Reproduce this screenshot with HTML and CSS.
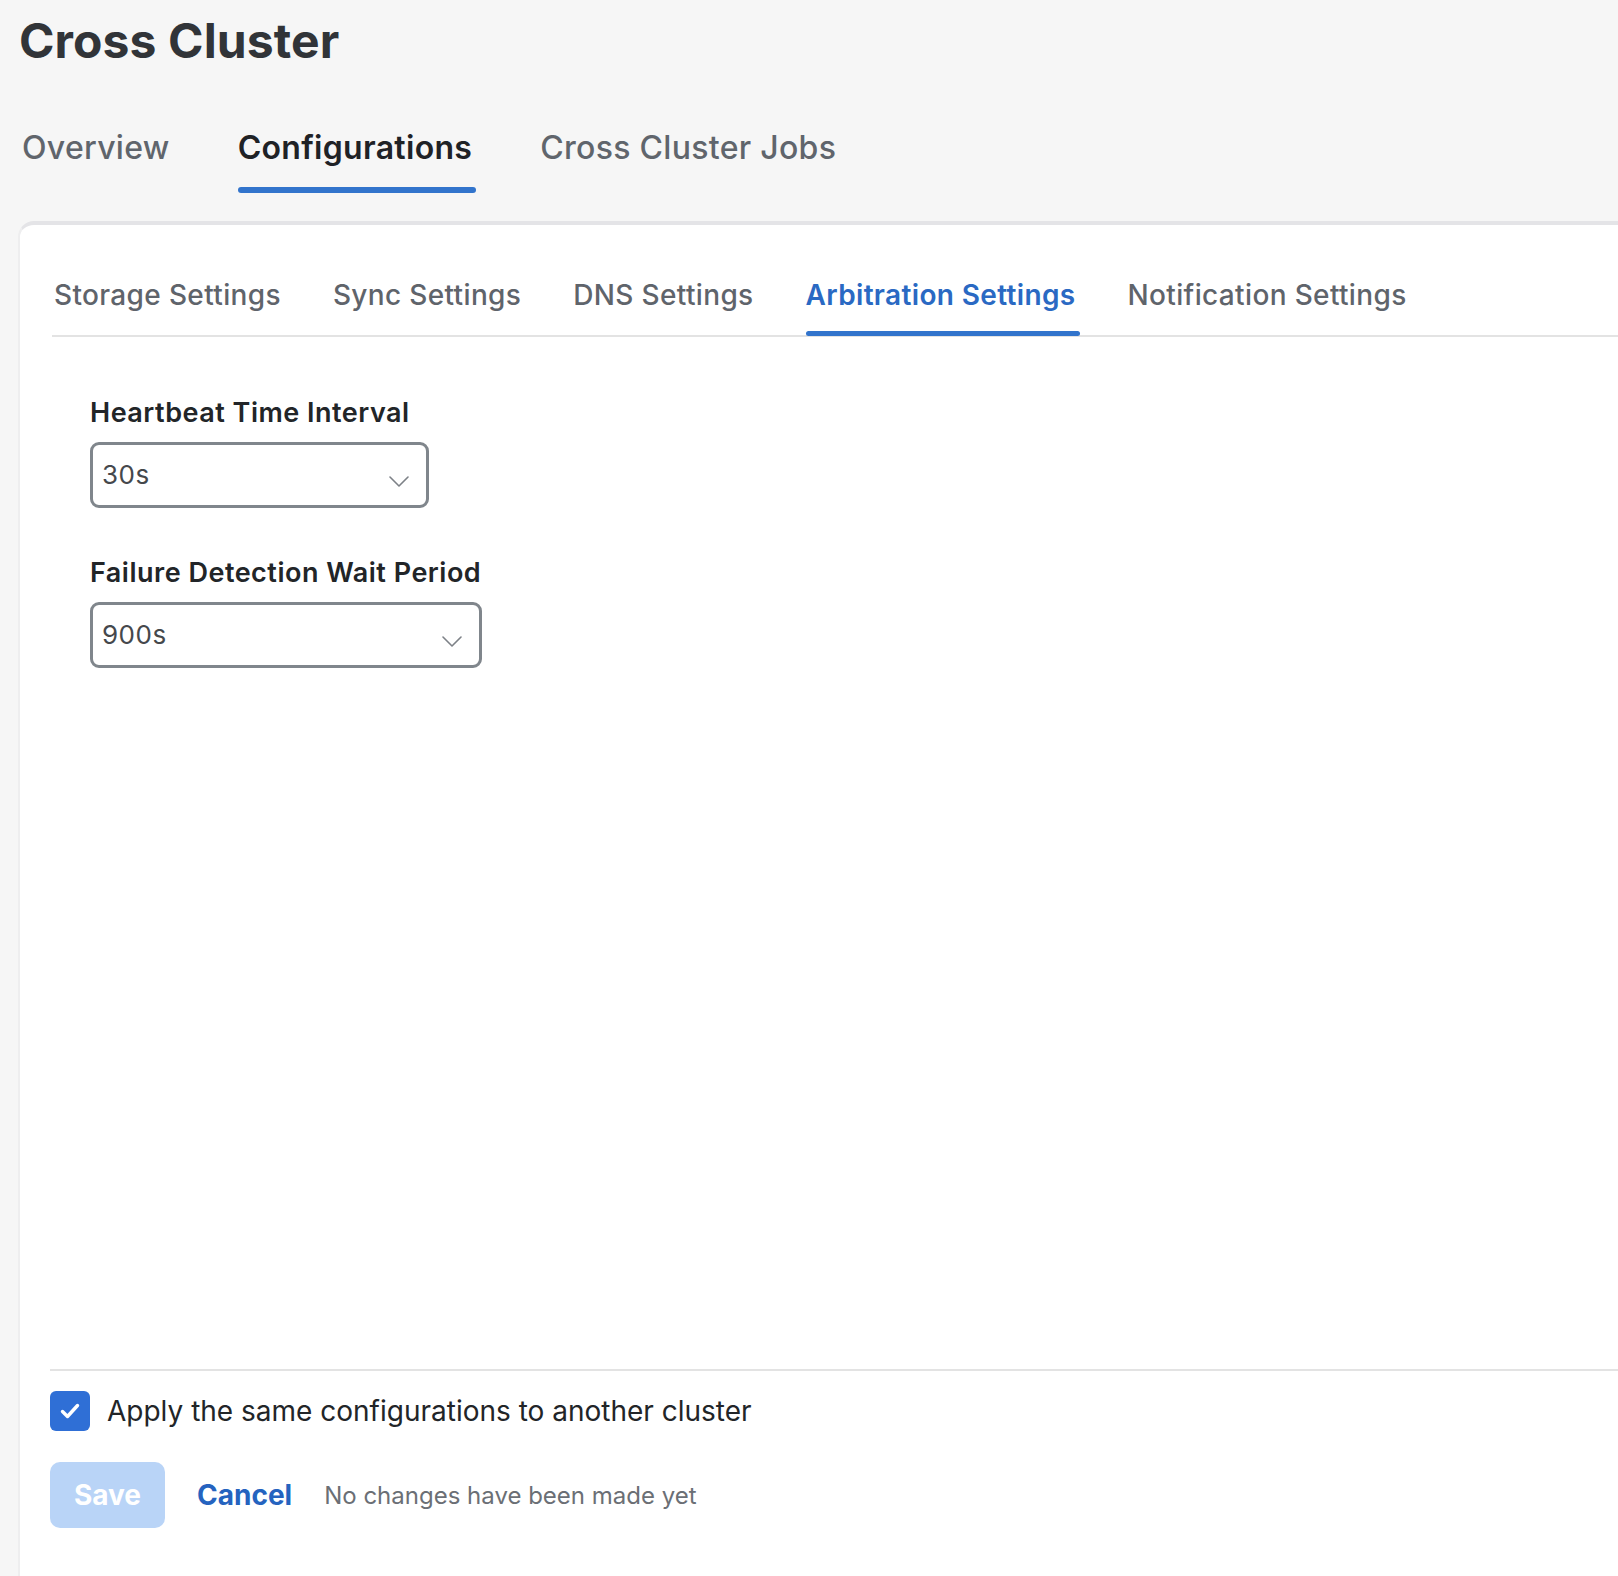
FILE: index.html
```
<!DOCTYPE html>
<html lang="en">
<head>
<meta charset="utf-8">
<title>Cross Cluster</title>
<link rel="stylesheet" href="styles.css">
</head>
<body>
<div class="page">
  <h1 class="title">Cross Cluster</h1>
  <nav class="main-tabs">
    <div class="main-tab"><span class="tab-text">Overview</span><span class="tab-bar"></span></div>
    <div class="main-tab active"><span class="tab-text">Configurations</span><span class="tab-bar"></span></div>
    <div class="main-tab"><span class="tab-text">Cross Cluster Jobs</span><span class="tab-bar"></span></div>
  </nav>
  <section class="card">
    <nav class="sub-tabs">
      <div class="sub-tab"><span class="tab-text">Storage Settings</span><span class="tab-bar"></span></div>
      <div class="sub-tab"><span class="tab-text">Sync Settings</span><span class="tab-bar"></span></div>
      <div class="sub-tab"><span class="tab-text">DNS Settings</span><span class="tab-bar"></span></div>
      <div class="sub-tab active"><span class="tab-text">Arbitration Settings</span><span class="tab-bar"></span></div>
      <div class="sub-tab"><span class="tab-text">Notification Settings</span><span class="tab-bar"></span></div>
    </nav>
    <div class="form">
      <div class="field">
        <label class="field-label">Heartbeat Time Interval</label>
        <div class="select select-short">
          <span class="select-value">30s</span>
          <svg class="chevron" width="20" height="11" viewBox="0 0 20 11"><path d="M1 1 L10 10 L19 1" fill="none" stroke="#7d8187" stroke-width="1.6" stroke-linecap="round" stroke-linejoin="round"/></svg>
        </div>
      </div>
      <div class="field field-next">
        <label class="field-label">Failure Detection Wait Period</label>
        <div class="select select-long">
          <span class="select-value">900s</span>
          <svg class="chevron" width="20" height="11" viewBox="0 0 20 11"><path d="M1 1 L10 10 L19 1" fill="none" stroke="#7d8187" stroke-width="1.6" stroke-linecap="round" stroke-linejoin="round"/></svg>
        </div>
      </div>
    </div>
    <footer class="footer">
      <div class="check-row">
        <span class="checkbox">
          <svg width="40" height="40" viewBox="0 0 40 40"><path d="M12.5 20.5 L17.5 25.5 L27.5 14.5" fill="none" stroke="#ffffff" stroke-width="3.4" stroke-linecap="round" stroke-linejoin="round"/></svg>
        </span>
        <span class="check-label">Apply the same configurations to another cluster</span>
      </div>
      <div class="actions">
        <button class="btn-save" type="button">Save</button>
        <button class="btn-cancel" type="button">Cancel</button>
        <span class="status">No changes have been made yet</span>
      </div>
    </footer>
  </section>
</div>
</body>
</html>
```
FILE: styles.css
```
* { box-sizing: border-box; }
html, body {
  margin: 0;
  padding: 0;
  background: #f6f6f6;
  font-family: Inter, "Noto Sans", "Liberation Sans", sans-serif;
}
.page {
  min-height: 100vh;
  height: 1576px;
  padding-left: 18px;
  display: flex;
  flex-direction: column;
  overflow: hidden;
}
.title {
  margin: 0 0 0 1px;
  padding-top: 12px;
  font-size: 48px;
  line-height: 58px;
  font-weight: 700;
  color: #313438;
  letter-spacing: 0.1px;
}
.main-tabs {
  display: flex;
  gap: 68px;
  margin-top: 58px;
  margin-left: 4px;
}
.main-tab, .sub-tab {
  display: flex;
  flex-direction: column;
  align-items: stretch;
}
.main-tab .tab-text {
  font-size: 32px;
  line-height: 40px;
  font-weight: 500;
  color: #60656c;
  letter-spacing: 0.3px;
}
.main-tab .tab-bar {
  margin-top: 19px;
  height: 6px;
  border-radius: 3px;
  margin-right: -4px;
  background: transparent;
}
.main-tab.active .tab-text {
  font-weight: 600;
  color: #1f2226;
}
.main-tab.active .tab-bar { background: #3274cc; }

.card {
  flex: 1;
  margin-top: 28px;
  background: #ffffff;
  border-top: 4px solid #e4e4e7;
  border-left: 2px solid #eeeeef;
  border-top-left-radius: 16px;
  padding-left: 30px;
  display: flex;
  flex-direction: column;
}
.sub-tabs {
  display: flex;
  gap: 52px;
  margin-top: 53px;
  margin-left: 2px;
  padding-left: 2px;
  border-bottom: 2px solid #e3e3e3;
}
.sub-tab { margin-bottom: -1px; }
.sub-tab .tab-text {
  font-size: 28px;
  line-height: 34px;
  font-weight: 500;
  color: #5f646b;
  letter-spacing: 0.35px;
}
.sub-tab .tab-bar {
  margin-top: 19px;
  height: 5px;
  border-radius: 3px;
  margin-right: -4px;
  background: transparent;
}
.sub-tab.active .tab-text {
  font-weight: 600;
  color: #2a69c3;
}
.sub-tab.active .tab-bar { background: #3274cc; }

.form {
  flex: 1;
  padding-top: 60px;
  padding-left: 40px;
  display: flex;
  flex-direction: column;
}
.field { display: flex; flex-direction: column; }
.field-next { margin-top: 49px; }
.field-label {
  font-size: 27px;
  line-height: 32px;
  font-weight: 600;
  color: #222528;
  letter-spacing: 0.5px;
}
.select {
  margin-top: 13px;
  height: 66px;
  border: 3px solid #80868c;
  border-radius: 9px;
  padding-left: 9px;
  padding-right: 17px;
  display: flex;
  align-items: center;
  justify-content: space-between;
}
.select-short { width: 339px; }
.select-long { width: 392px; }
.select-value {
  font-size: 26px;
  line-height: 32px;
  font-weight: 400;
  color: #45484c;
  letter-spacing: 0.5px;
}
.chevron { margin-top: 12px; }

.footer {
  border-top: 2px solid #e3e3e3;
  padding-top: 20px;
  padding-bottom: 48px;
}
.check-row {
  display: flex;
  align-items: center;
  gap: 17px;
  height: 40px;
}
.checkbox {
  width: 40px;
  height: 40px;
  border-radius: 6px;
  background: #2f6fd6;
  display: flex;
}
.check-label {
  font-size: 28px;
  font-weight: 400;
  color: #222528;
}
.actions {
  margin-top: 31px;
  display: flex;
  align-items: center;
  gap: 32px;
}
.btn-save {
  width: 115px;
  height: 66px;
  border: none;
  border-radius: 10px;
  background: #b9d4f7;
  color: #ffffff;
  font-family: Inter, "Noto Sans", "Liberation Sans", sans-serif;
  font-size: 28px;
  font-weight: 700;
  padding: 0;
}
.btn-cancel {
  border: none;
  background: none;
  padding: 0;
  font-family: Inter, "Noto Sans", "Liberation Sans", sans-serif;
  font-size: 28px;
  font-weight: 700;
  color: #2563bf;
}
.status {
  font-size: 24px;
  font-weight: 400;
  color: #6b6f75;
}
```
